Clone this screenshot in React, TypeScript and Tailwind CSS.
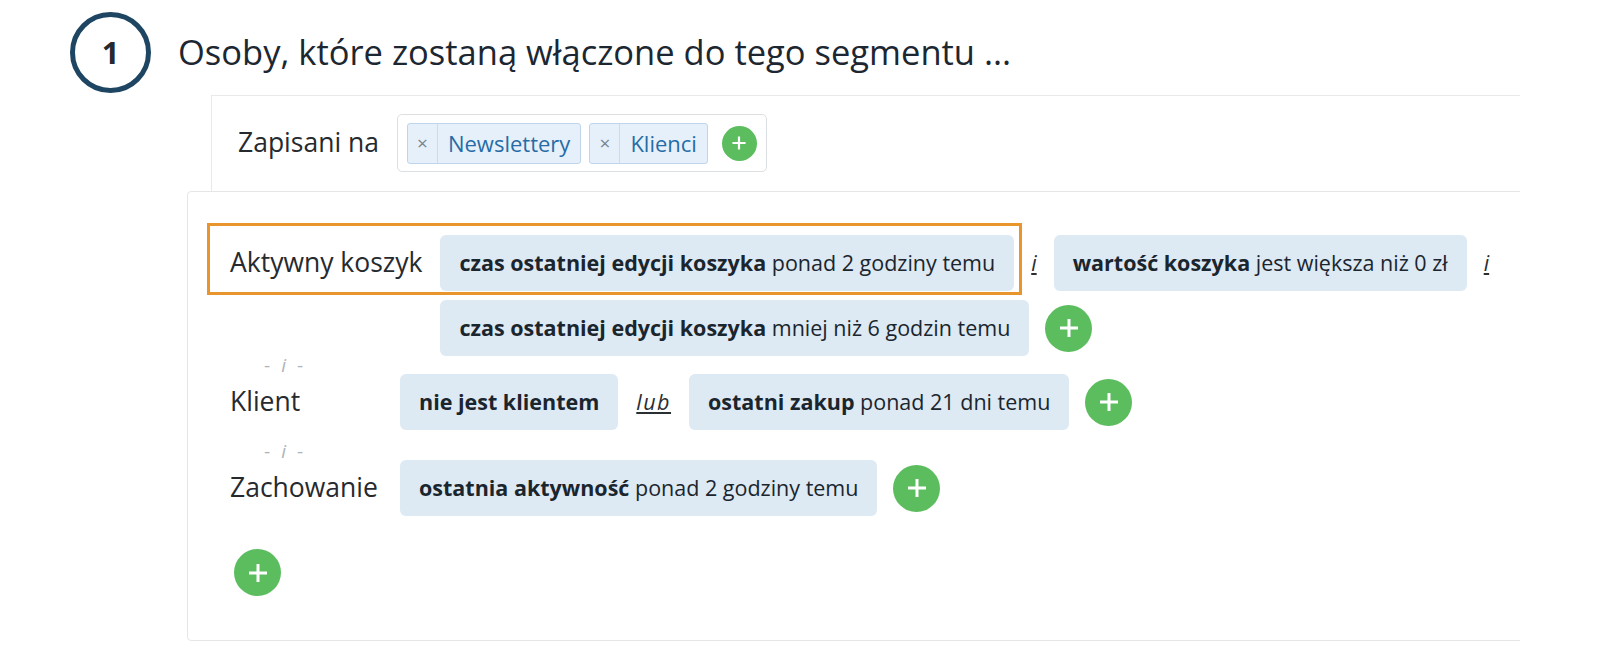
import React from "react";

const font = { fontFamily: '"Open Sans", "Noto Sans", sans-serif' };

function Plus({ size = "md" }: { size?: "sm" | "md" }) {
  const cls =
    size === "sm"
      ? "w-[35px] h-[35px]"
      : "w-[47px] h-[47px]";
  const s = size === "sm" ? 16 : 22;
  return (
    <div className={`${cls} shrink-0 rounded-full bg-[#5cbd5f] flex items-center justify-center`}>
      <svg width={s} height={s} viewBox="0 0 22 22">
        <path d="M11 2v18M2 11h18" stroke="white" strokeWidth="3" strokeLinecap="butt" />
      </svg>
    </div>
  );
}

function Chip({ bold, rest }: { bold: string; rest?: string }) {
  return (
    <div className="h-[56px] shrink-0 rounded-[6px] bg-[#dde9f3] px-[19px] flex items-center text-[21.5px] text-[#1a252e] whitespace-nowrap">
      <span className="font-bold">{bold}</span>
      {rest ? <span>&nbsp;{rest}</span> : null}
    </div>
  );
}

function Conj({ t, wide = false }: { t: string; wide?: boolean }) {
  return (
    <span
      className={`text-[21.5px] italic underline text-[#2a2f33] ${wide ? "px-[2px] tracking-[1.5px]" : "px-[1px]"}`}
    >
      {t}
    </span>
  );
}

function Tag({ label }: { label: string }) {
  return (
    <div className="h-[41px] flex items-stretch rounded-[3px] border border-[#bfd5ea] bg-[#e6f0fa]">
      <div className="w-[30px] flex items-center justify-center border-r border-[#c9dbec] text-[#7a8590] text-[19px]">
        ×
      </div>
      <div className="px-[10px] flex items-center text-[22px] text-[#266ca6]">{label}</div>
    </div>
  );
}

function Sep({ extra = "" }: { extra?: string }) {
  return (
    <div className={`${extra} h-[18px] flex items-center pl-[34px] text-[19px] text-[#aeb4ba]`}>
      - <span className="italic mx-[11px]">i</span> -
    </div>
  );
}

export default function App() {
  return (
    <div className="min-h-[672px] w-[1600px] bg-white text-[#1c2731]" style={font}>
      <div className="pt-[12px] pl-[70px] flex items-center">
        <div className="w-[81px] h-[81px] rounded-full border-[5px] border-[#1e4662] flex items-center justify-center">
          <span className="text-[31px] font-bold text-[#262a2e] leading-none">1</span>
        </div>
        <h1 className="ml-[27px] text-[34.5px] text-[#1c2731] leading-none">
          Osoby, które zostaną włączone do tego segmentu ...
        </h1>
      </div>

      <div className="w-[1520px] overflow-hidden pt-[2px]">
        <div className="ml-[211px] w-[1400px] border-t border-l border-[#e7e9eb] pt-[18px] pb-[19px] pl-[26px] flex items-center">
          <span className="text-[26.5px] text-[#262a2e]">Zapisani na</span>
          <div className="ml-[18px] h-[58px] rounded-[5px] border border-[#dcdfe2] px-[9px] flex items-center gap-[8px]">
            <Tag label="Newslettery" />
            <Tag label="Klienci" />
            <div className="ml-[6px]">
              <Plus size="sm" />
            </div>
          </div>
        </div>

        <div className="relative ml-[187px] w-[1400px] rounded-[4px] border border-[#e4e6e8] pt-[43px] pb-[44px] pl-[42px]">
          <div className="absolute left-[19px] top-[31px] w-[815px] h-[72px] border-[3px] border-[#e8952d] pointer-events-none" />

          <div className="flex items-start">
            <div className="min-w-[152px] mr-[18px] h-[56px] flex items-center text-[26.5px] text-[#262a2e] whitespace-nowrap">
              Aktywny koszyk
            </div>
            <div className="w-[1060px] flex flex-wrap items-center gap-x-[16px] gap-y-[9px]">
              <Chip bold="czas ostatniej edycji koszyka" rest="ponad 2 godziny temu" />
              <Conj t="i" />
              <Chip bold="wartość koszyka" rest="jest większa niż 0 zł" />
              <Conj t="i" />
              <Chip bold="czas ostatniej edycji koszyka" rest="mniej niż 6 godzin temu" />
              <Plus />
            </div>
          </div>

          <Sep />

          <div className="flex items-center">
            <div className="min-w-[152px] mr-[18px] h-[56px] flex items-center text-[26.5px] text-[#262a2e]">
              Klient
            </div>
            <div className="flex items-center gap-x-[16px]">
              <Chip bold="nie jest klientem" />
              <Conj t="lub" wide />
              <Chip bold="ostatni zakup" rest="ponad 21 dni temu" />
              <Plus />
            </div>
          </div>

          <Sep extra="mt-[12px]" />

          <div className="flex items-center">
            <div className="min-w-[152px] mr-[18px] h-[56px] flex items-center text-[26.5px] text-[#262a2e]">
              Zachowanie
            </div>
            <div className="flex items-center gap-x-[16px]">
              <Chip bold="ostatnia aktywność" rest="ponad 2 godziny temu" />
              <Plus />
            </div>
          </div>

          <div className="mt-[33px] ml-[4px]">
            <Plus />
          </div>
        </div>
      </div>
    </div>
  );
}
